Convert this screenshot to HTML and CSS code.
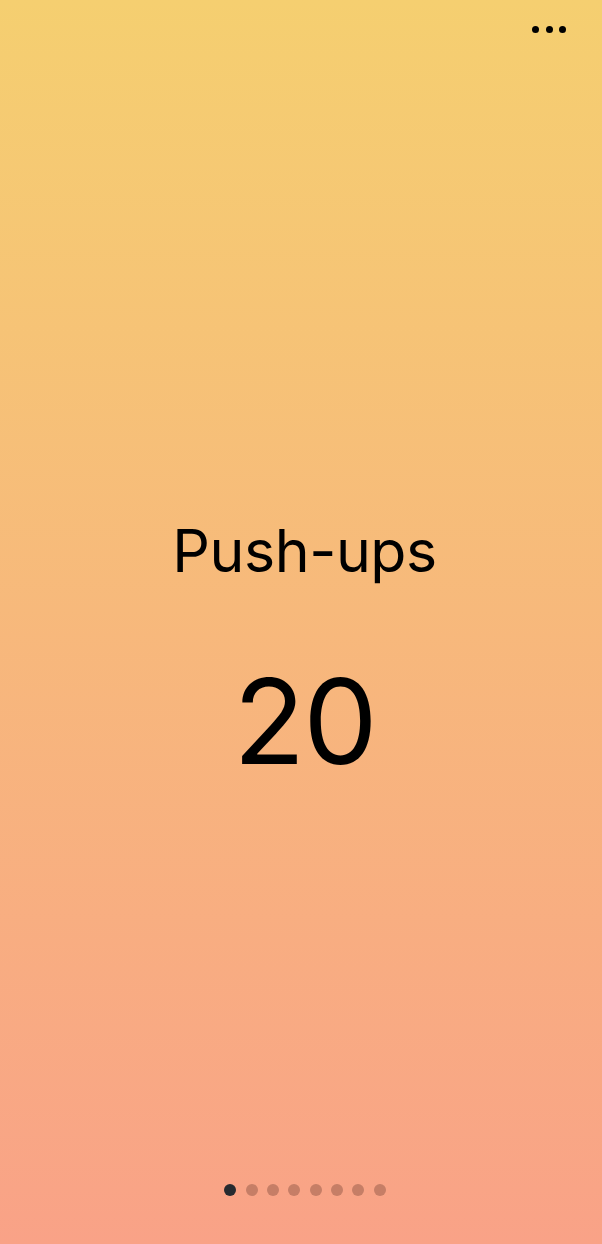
FILE: index.html
```html
<!DOCTYPE html>
<html lang="en">
<head>
<meta charset="utf-8">
<title>Push-ups</title>
<link rel="stylesheet" href="styles.css">
</head>
<body>
<div class="screen">
  <header class="topbar">
    <button class="more" aria-label="More">
      <span class="dot"></span><span class="dot"></span><span class="dot"></span>
    </button>
  </header>
  <main class="content">
    <h1 class="title">Push-ups</h1>
    <div class="count">20</div>
  </main>
  <nav class="pager">
    <span class="pdot active"></span>
    <span class="pdot"></span>
    <span class="pdot"></span>
    <span class="pdot"></span>
    <span class="pdot"></span>
    <span class="pdot"></span>
    <span class="pdot"></span>
    <span class="pdot"></span>
  </nav>
</div>
</body>
</html>
```
FILE: styles.css
```css
html, body {
  margin: 0;
  padding: 0;
}
body {
  font-family: "Inter", "Roboto", "Liberation Sans", sans-serif;
  color: #000;
}
.screen {
  width: 602px;
  height: 1244px;
  display: flex;
  flex-direction: column;
  background: linear-gradient(to bottom, #f5cf70 0%, #f9a287 100%);
  box-sizing: border-box;
}
.topbar {
  display: flex;
  justify-content: flex-end;
  padding: 26px 36px 0 0;
  height: 40px;
  box-sizing: border-box;
}
.more {
  display: flex;
  gap: 6.5px;
  background: none;
  border: 0;
  padding: 0;
  height: 7px;
}
.more .dot {
  width: 7px;
  height: 7px;
  border-radius: 50%;
  background: #000;
}
.content {
  flex: 1;
  display: flex;
  flex-direction: column;
  align-items: center;
  justify-content: center;
  padding-top: 72px;
  padding-left: 7px;
}
.title {
  margin: 0;
  font-weight: 400;
  font-size: 59px;
  line-height: 72px;
  letter-spacing: -0.4px;
}
.count {
  margin-top: 74px;
  font-size: 118px;
  line-height: 120px;
  font-weight: 400;
  letter-spacing: -2px;
}
.pager {
  display: flex;
  justify-content: center;
  gap: 9.3px;
  padding-bottom: 48px;
  padding-left: 8px;
}
.pdot {
  width: 12px;
  height: 12px;
  border-radius: 50%;
  background: rgba(80, 40, 30, 0.3);
}
.pdot.active {
  background: #272b30;
}
```
